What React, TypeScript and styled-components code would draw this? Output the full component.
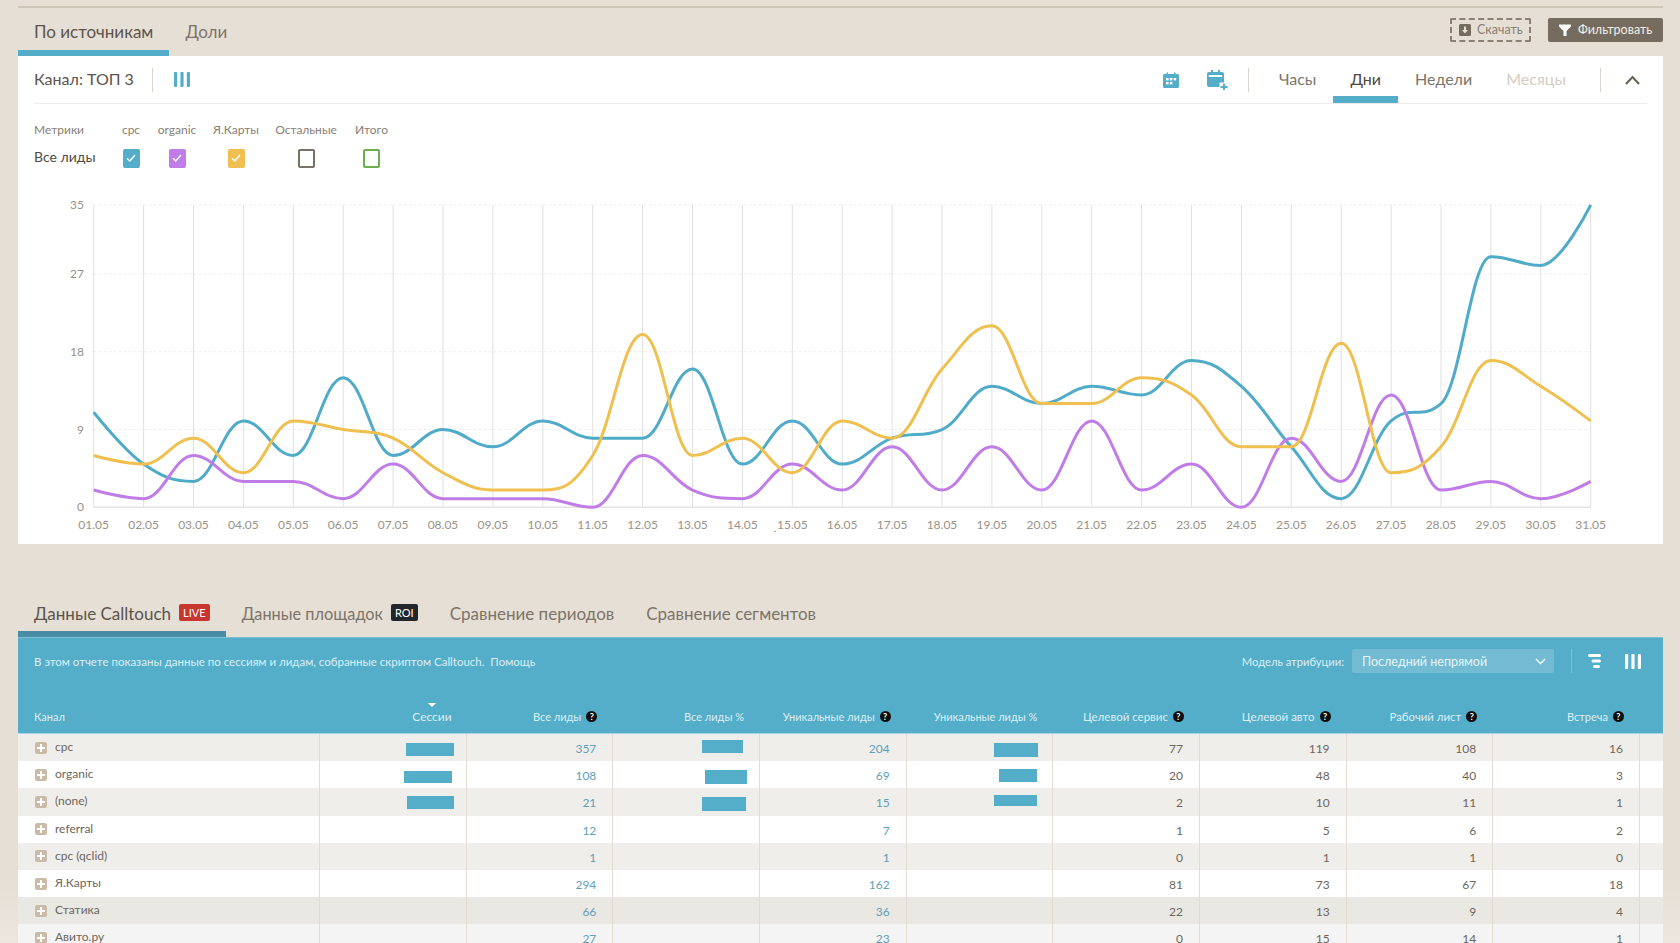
import React from "react";
import styled, { createGlobalStyle } from "styled-components";

const FONT = `"Lato", "Noto Sans", "Open Sans", sans-serif`;
const BLUE = "#54adc9";

const Global = createGlobalStyle`
  html, body { margin: 0; padding: 0; background: #e6dfd6; }
  body { font-family: ${FONT}; overflow: hidden; }
  * { box-sizing: border-box; }
`;

const Page = styled.div`
  width: 1680px;
  height: 943px;
  overflow: hidden;
  padding: 6px 17px 0 18px;
  background: linear-gradient(to bottom, #e6dfd6 0, #e6dfd6 880px, #ece6de 943px);
`;
const TopRule = styled.div`
  height: 2px;
  background: #cfc6ba;
`;
const TabBar = styled.div`
  height: 48px;
  display: flex;
  justify-content: space-between;
`;
const Tabs = styled.div`
  display: flex;
`;
const Tab = styled.div<{ $active?: boolean; $dark?: boolean; $size?: number }>`
  display: flex;
  align-items: center;
  gap: 8px;
  padding: 5px 16px 0;
  font-size: ${(p) => p.$size ?? 17}px;
  white-space: nowrap;
  color: ${(p) => (p.$active ? "#5b544b" : "#7d7468")};
  border-bottom: 6px solid
    ${(p) => (p.$active ? (p.$dark ? "#4a8ba5" : BLUE) : "transparent")};
`;
const LowerTab = styled(Tab)`
  padding-top: 7px;
`;
const Badge = styled.span<{ $bg: string }>`
  background: ${(p) => p.$bg};
  color: #fff;
  font-size: 11px;
  line-height: 17px;
  height: 17px;
  padding: 0 4px;
  border-radius: 2px;
  margin-top: -3px;
`;
const Actions = styled.div`
  display: flex;
  gap: 17px;
  padding-top: 10px;
`;
const DownloadBtn = styled.div`
  width: 81px;
  height: 24px;
  border: 2px dashed #8a8073;
  border-radius: 2px;
  display: flex;
  align-items: center;
  gap: 6px;
  padding-left: 7px;
  font-size: 12.5px;
  color: #8a8073;
`;
const BtnText = styled.span`
  margin-top: -2px;
`;
const FilterBtn = styled.div`
  width: 115px;
  height: 24px;
  background: #756b5e;
  border-radius: 2px;
  display: flex;
  align-items: center;
  gap: 7px;
  padding-left: 11px;
  font-size: 12.5px;
  color: #f2eee8;
`;
const Card = styled.div`
  height: 488px;
  background: #fff;
`;
const CardHead = styled.div`
  height: 48px;
  margin: 0 16px;
  border-bottom: 1px solid #ececec;
  display: flex;
  align-items: center;
`;
const Title = styled.div`
  font-size: 16px;
  color: #5b544b;
  white-space: nowrap;
  width: 118px;
  margin-top: -3px;
`;
const VRule = styled.div<{ $c?: string }>`
  width: 1px;
  height: 24px;
  background: ${(p) => p.$c ?? "#ddd6cc"};
`;
const ColsIconWrap = styled.div`
  margin-left: 21px;
  display: flex;
`;
const Spacer = styled.div`
  flex: 1;
`;
const CalIcons = styled.div`
  display: flex;
  align-items: center;
  gap: 28px;
  margin-right: 20px;
`;
const Period = styled.div<{ $active?: boolean; $off?: boolean }>`
  align-self: stretch;
  display: flex;
  align-items: center;
  padding: 4px 17px 0;
  font-size: 16px;
  border-bottom: 7px solid ${(p) => (p.$active ? BLUE : "transparent")};
  color: ${(p) => (p.$off ? "#d5cdc2" : p.$active ? "#4f4941" : "#7d7468")};
`;
const Periods = styled.div`
  align-self: stretch;
  display: flex;
  margin-left: 13px;
  margin-right: 17px;
`;
const Chevron = styled.div`
  margin-left: 24px;
  margin-right: 7px;
  display: flex;
`;
const Metrics = styled.div`
  padding: 17px 0 0 16px;
  height: 76px;
  display: grid;
  grid-template-columns: 72px 20px 42px 46px 64px 37px;
  column-gap: 15px;
  grid-template-rows: 16px 20px;
  row-gap: 11px;
  justify-items: center;
  align-items: center;
  justify-content: start;
`;
const MetricHead = styled.div`
  font-size: 12px;
  color: #8a8073;
  white-space: nowrap;
`;
const MetricFirst = styled(MetricHead)`
  justify-self: start;
`;
const MetricName = styled.div`
  justify-self: start;
  font-size: 14px;
  color: #4f4941;
  white-space: nowrap;
  margin-top: -3px;
`;
const Check = styled.div<{ $fill?: string; $line?: string }>`
  width: 17px;
  height: 19px;
  border-radius: 2px;
  background: ${(p) => p.$fill ?? "#fff"};
  border: ${(p) => (p.$line ? `2px solid ${p.$line}` : "none")};
  display: flex;
  align-items: center;
  justify-content: center;
`;
const ChartSvg = styled.svg`
  display: block;
  width: 1645px;
  height: 364px;
`;
const LowerTabs = styled.div`
  display: flex;
  margin-top: 45px;
  height: 48px;
`;
const Panel = styled.div`
  background: ${BLUE};
  height: 97px;
  border-top: 1px solid #7dbfd5;
`;
const Toolbar = styled.div`
  height: 49px;
  padding: 0 12px 3px 16px;
  display: flex;
  align-items: center;
  color: #dceff5;
`;
const Info = styled.div`
  font-size: 11.5px;
  white-space: pre;
`;
const ModelLabel = styled.div`
  font-size: 11.2px;
  margin-right: 8px;
`;
const Select = styled.div`
  width: 202px;
  height: 24px;
  background: #72bbd3;
  border-radius: 2px;
  padding: 0 8px 0 10px;
  display: flex;
  justify-content: space-between;
  align-items: center;
  font-size: 12.5px;
  color: #e8f5f9;
  margin-right: 17px;
`;
const ToolIcons = styled.div`
  display: flex;
  align-items: center;
  gap: 24px;
  margin-left: 16px;
  margin-right: 10px;
`;
const grid = `
  display: grid;
  grid-template-columns: 302px repeat(9, 146.67px) 1fr;
`;
const HeadRow = styled.div`
  ${grid}
  height: 47px;
  border-bottom: 1px solid #a9d3e1;
  color: #dceff5;
`;
const HeadCell = styled.div<{ $left?: boolean; $pad?: number; $size?: number }>`
  position: relative;
  display: flex;
  justify-content: ${(p) => (p.$left ? "flex-start" : "flex-end")};
  align-items: center;
  gap: 5px;
  font-size: ${(p) => p.$size ?? 11}px;
  padding: ${(p) => (p.$left ? "12px 0 0 16px" : `12px ${p.$pad ?? 16}px 0 0`)};
  white-space: nowrap;
`;
const SortMark = styled.span`
  position: absolute;
  top: 16px;
  right: 31px;
  width: 0;
  height: 0;
  border-left: 4px solid transparent;
  border-right: 4px solid transparent;
  border-top: 4px solid #fff;
`;
const Help = styled.span`
  width: 11px;
  height: 11px;
  border-radius: 50%;
  background: #0d0d0d;
  color: #fff;
  font-size: 9px;
  font-weight: 700;
  line-height: 11px;
  text-align: center;
  flex: none;
`;
const Row = styled.div<{ $odd: boolean; $bg?: string }>`
  ${grid}
  height: 27.2px;
  background: ${(p) => p.$bg ?? (p.$odd ? "#f0eeea" : "#fff")};
`;
const NameCell = styled.div`
  display: flex;
  align-items: center;
  gap: 8px;
  padding: 0 0 2px 17px;
  font-size: 12px;
  color: #6d665d;
  border-right: 1px solid #e3dcd3;
`;
const Plus = styled.span`
  width: 12px;
  height: 12px;
  margin-top: 2px;
  background: #c9bba7;
  border-radius: 2px;
  display: flex;
  align-items: center;
  justify-content: center;
`;
const Cell = styled.div<{ $link?: boolean }>`
  display: flex;
  justify-content: flex-end;
  align-items: center;
  padding: 2px 16px 0 0;
  font-size: 12px;
  color: ${(p) => (p.$link ? "#5f9fb8" : "#6d665d")};
  border-right: 1px solid #e3dcd3;
`;
const TailCell = styled.div``;
const Bar = styled.div<{ $w: number; $h: number; $r: number; $t: number }>`
  width: ${(p) => p.$w}px;
  height: ${(p) => p.$h}px;
  margin-right: ${(p) => p.$r}px;
  transform: translateY(${(p) => p.$t}px);
  background: ${BLUE};
`;

// ---- chart ----
const X0 = 93.7;
const STEP = 49.9;
const Y0 = 507.3;
const UNIT = 8.64;
const xAt = (i: number) => X0 + i * STEP;
const yAt = (v: number) => Y0 - v * UNIT;

function spline(data: number[]): string {
  const pts = data.map((v, i) => [xAt(i), yAt(v)]);
  const ctrl = pts.map(([x, y], i) => {
    const prev = pts[i - 1];
    const next = pts[i + 1];
    if (!prev || !next) return { lx: x, ly: y, rx: x, ry: y };
    const s = 1.5;
    const d = 2.5;
    const lx = (s * x + prev[0]) / d;
    let ly = (s * y + prev[1]) / d;
    const rx = (s * x + next[0]) / d;
    let ry = (s * y + next[1]) / d;
    const c = ((ry - ly) * (rx - x)) / (rx - lx) + y - ry;
    ly += c;
    ry += c;
    if (ly > prev[1] && ly > y) {
      ly = Math.max(prev[1], y);
      ry = 2 * y - ly;
    } else if (ly < prev[1] && ly < y) {
      ly = Math.min(prev[1], y);
      ry = 2 * y - ly;
    }
    if (ry > next[1] && ry > y) {
      ry = Math.max(next[1], y);
      ly = 2 * y - ry;
    } else if (ry < next[1] && ry < y) {
      ry = Math.min(next[1], y);
      ly = 2 * y - ry;
    }
    return { lx, ly, rx, ry };
  });
  let d = `M${pts[0][0]} ${pts[0][1]}`;
  for (let i = 1; i < pts.length; i++) {
    const a = ctrl[i - 1];
    const b = ctrl[i];
    d += ` C${a.rx.toFixed(2)} ${a.ry.toFixed(2)} ${b.lx.toFixed(2)} ${b.ly.toFixed(2)} ${pts[i][0].toFixed(2)} ${pts[i][1].toFixed(2)}`;
  }
  return d;
}

const cpc = [11, 5, 3, 10, 6, 15, 6, 9, 7, 10, 8, 8, 16, 5, 10, 5, 8, 9, 14, 12, 14, 13, 17, 14, 7, 1, 10, 12, 29, 28, 35];
const yellow = [6, 5, 8, 4, 10, 9, 8, 4, 2, 2, 6, 20, 6, 8, 4, 10, 8, 16, 21, 12, 12, 15, 13, 7, 7, 19, 4, 7, 17, 14, 10];
const purple = [2, 1, 6, 3, 3, 1, 5, 1, 1, 1, 0, 6, 2, 1, 5, 2, 7, 2, 7, 2, 10, 2, 5, 0, 8, 3, 13, 2, 3, 1, 3];

const Chart = () => (
  <ChartSvg viewBox="18 180 1645 364">
    {[35, 27, 18, 9].map((v) => (
      <line key={v} x1={X0} x2={xAt(30)} y1={yAt(v)} y2={yAt(v)} stroke="#eeeeee" strokeWidth="1" strokeDasharray="3 2" />
    ))}
    {cpc.map((_, i) => (
      <line key={i} x1={xAt(i)} x2={xAt(i)} y1={yAt(35)} y2={Y0} stroke="#e0e0e0" strokeWidth="1" />
    ))}
    <line x1={X0} x2={xAt(30)} y1={Y0} y2={Y0} stroke="#e4e4e4" strokeWidth="1.5" />
    {[35, 27, 18, 9, 0].map((v) => (
      <text key={v} x={84} y={yAt(v) + 4} textAnchor="end" fontSize="12" fill="#9b9285" fontFamily={FONT}>
        {v}
      </text>
    ))}
    {cpc.map((_, i) => (
      <text key={i} x={xAt(i)} y={529} textAnchor="middle" fontSize="12" fill="#9b9285" fontFamily={FONT}>
        {String(i + 1).padStart(2, "0")}.05
      </text>
    ))}
    <circle cx={775} cy={531.5} r={0.7} fill="#777" />
    <path d={spline(cpc)} fill="none" stroke="#4fabc7" strokeWidth="3" />
    <path d={spline(purple)} fill="none" stroke="#c07de8" strokeWidth="3" />
    <path d={spline(yellow)} fill="none" stroke="#efc04f" strokeWidth="3" />
  </ChartSvg>
);

// ---- icons ----
const ColsIcon = ({ c }: { c: string }) => (
  <svg width="16" height="15" viewBox="0 0 16 15">
    <rect x="0" y="0" width="3.2" height="15" rx="1" fill={c} />
    <rect x="6.4" y="0" width="3.2" height="15" rx="1" fill={c} />
    <rect x="12.8" y="0" width="3.2" height="15" rx="1" fill={c} />
  </svg>
);
const CalIcon = () => (
  <svg width="16" height="16" viewBox="0 0 16 16">
    <path d="M1.5 2H3.5V0.5H5V2H11V0.5H12.5V2H14.5C15.3 2 16 2.7 16 3.5V14.5C16 15.3 15.3 16 14.5 16H1.5C0.7 16 0 15.3 0 14.5V3.5C0 2.7 0.7 2 1.5 2Z" fill={BLUE} />
    <g fill="#fff">
      <rect x="3" y="6" width="2.6" height="2.4" />
      <rect x="6.8" y="6" width="2.6" height="2.4" />
      <rect x="10.6" y="6" width="2.6" height="2.4" />
      <rect x="3" y="10" width="2.6" height="2.4" />
      <rect x="6.8" y="10" width="2.6" height="2.4" />
    </g>
  </svg>
);
const CalPlusIcon = () => (
  <svg width="21" height="20" viewBox="0 0 21 20">
    <path d="M2 2H4V0H6V2H11V0H13V2H15C16.1 2 17 2.9 17 4V12.5H12.5V17H2C0.9 17 0 16.1 0 15V4C0 2.9 0.9 2 2 2Z" fill={BLUE} />
    <rect x="1.8" y="5" width="13.4" height="2" fill="#fff" />
    <path d="M16 13.5H18V16H20.5V18H18V20H16V18H13.5V16H16Z" fill={BLUE} />
  </svg>
);
const ChevronUp = () => (
  <svg width="15" height="10" viewBox="0 0 15 10">
    <path d="M1 9L7.5 2L14 9" fill="none" stroke="#6e6559" strokeWidth="2.2" />
  </svg>
);
const ChevronDown = () => (
  <svg width="11" height="7" viewBox="0 0 11 7">
    <path d="M1 1L5.5 5.5L10 1" fill="none" stroke="#e8f5f9" strokeWidth="1.6" />
  </svg>
);
const DownIcon = () => (
  <svg width="12" height="12" viewBox="0 0 12 12">
    <rect width="12" height="12" rx="1.5" fill="#756b5e" />
    <path d="M5 2.5H7V6H9L6 9.5L3 6H5Z" fill="#e6dfd6" />
  </svg>
);
const FunnelIcon = () => (
  <svg width="12" height="12" viewBox="0 0 12 12">
    <path d="M0 0.5H12V2.5L7.5 7V12H4.5V7L0 2.5Z" fill="#fff" />
  </svg>
);
const TickIcon = () => (
  <svg width="10" height="8" viewBox="0 0 10 8">
    <path d="M1 4.2L3.8 7L9 1" fill="none" stroke="#fff" strokeWidth="1.4" />
  </svg>
);
const StackIcon = () => (
  <svg width="13" height="14" viewBox="0 0 13 14">
    <rect x="0" y="0" width="13" height="3" rx="1.5" fill="#fff" />
    <rect x="3.5" y="5.5" width="9.5" height="3" rx="1.5" fill="#fff" />
    <rect x="5" y="11" width="7" height="3" rx="1.5" fill="#fff" />
  </svg>
);
const PlusIcon = () => (
  <svg width="8" height="8" viewBox="0 0 8 8">
    <path d="M3 0H5V3H8V5H5V8H3V5H0V3H3Z" fill="#fff" />
  </svg>
);

// ---- data ----
const heads: { t: string; help?: boolean; pad?: number; sort?: boolean; size?: number }[] = [
  { t: "Сессии", pad: 15, sort: true, size: 12 },
  { t: "Все лиды", help: true },
  { t: "Все лиды %" },
  { t: "Уникальные лиды", help: true },
  { t: "Уникальные лиды %" },
  { t: "Целевой сервис", help: true, size: 11.5 },
  { t: "Целевой авто", help: true, size: 11.5 },
  { t: "Рабочий лист", help: true, size: 11.4 },
  { t: "Встреча", help: true },
];
type B = { w: number; h: number; r: number; t: number };
const rows: { n: string; v: number[]; b?: [B, B, B]; bg?: string }[] = [
  { n: "cpc", v: [357, 204, 77, 119, 108, 16], b: [
    { w: 48, h: 13, r: -4, t: 1 }, { w: 41, h: 13, r: 0, t: -2 }, { w: 44, h: 14, r: -2, t: 1 } ] },
  { n: "organic", v: [108, 69, 20, 48, 40, 3], b: [
    { w: 48, h: 12, r: -2, t: 1 }, { w: 42, h: 14, r: -4, t: 1 }, { w: 38, h: 13, r: -1, t: 0 } ] },
  { n: "(none)", v: [21, 15, 2, 10, 11, 1], b: [
    { w: 47, h: 13, r: -4, t: 0 }, { w: 44, h: 14, r: -3, t: 1 }, { w: 43, h: 11, r: -1, t: -2 } ] },
  { n: "referral", v: [12, 7, 1, 5, 6, 2] },
  { n: "cpc (qclid)", v: [1, 1, 0, 1, 1, 0] },
  { n: "Я.Карты", v: [294, 162, 81, 73, 67, 18] },
  { n: "Статика", v: [66, 36, 22, 13, 9, 4], bg: "#eae8e3" },
  { n: "Авито.ру", v: [27, 23, 0, 15, 14, 1], bg: "#f4f4f4" },
];

export default function App() {
  return (
    <Page>
      <Global />
      <TopRule />
      <TabBar>
        <Tabs>
          <Tab $active>По источникам</Tab>
          <Tab>Доли</Tab>
        </Tabs>
        <Actions>
          <DownloadBtn>
            <DownIcon />
            <BtnText>Скачать</BtnText>
          </DownloadBtn>
          <FilterBtn>
            <FunnelIcon />
            <BtnText>Фильтровать</BtnText>
          </FilterBtn>
        </Actions>
      </TabBar>
      <Card>
        <CardHead>
          <Title>Канал: ТОП 3</Title>
          <VRule />
          <ColsIconWrap>
            <ColsIcon c={BLUE} />
          </ColsIconWrap>
          <Spacer />
          <CalIcons>
            <CalIcon />
            <CalPlusIcon />
          </CalIcons>
          <VRule />
          <Periods>
            <Period>Часы</Period>
            <Period $active>Дни</Period>
            <Period>Недели</Period>
            <Period $off>Месяцы</Period>
          </Periods>
          <VRule />
          <Chevron>
            <ChevronUp />
          </Chevron>
        </CardHead>
        <Metrics>
          <MetricFirst>Метрики</MetricFirst>
          <MetricHead>cpc</MetricHead>
          <MetricHead>organic</MetricHead>
          <MetricHead>Я.Карты</MetricHead>
          <MetricHead>Остальные</MetricHead>
          <MetricHead>Итого</MetricHead>
          <MetricName>Все лиды</MetricName>
          <Check $fill="#54adc9"><TickIcon /></Check>
          <Check $fill="#c07de8"><TickIcon /></Check>
          <Check $fill="#efc04f"><TickIcon /></Check>
          <Check $line="#7a7064" />
          <Check $line="#6ab04c" />
        </Metrics>
        <Chart />
      </Card>
      <LowerTabs>
        <LowerTab $active $dark>
          Данные Calltouch <Badge $bg="#c9352f">LIVE</Badge>
        </LowerTab>
        <LowerTab $size={16.3}>
          Данные площадок <Badge $bg="#22272b">ROI</Badge>
        </LowerTab>
        <LowerTab>Сравнение периодов</LowerTab>
        <LowerTab>Сравнение сегментов</LowerTab>
      </LowerTabs>
      <Panel>
        <Toolbar>
          <Info>В этом отчете показаны данные по сессиям и лидам, собранные скриптом Calltouch.  Помощь</Info>
          <Spacer />
          <ModelLabel>Модель атрибуции:</ModelLabel>
          <Select>
            Последний непрямой
            <ChevronDown />
          </Select>
          <VRule $c="#7dbfd5" />
          <ToolIcons>
            <StackIcon />
            <ColsIcon c="#fff" />
          </ToolIcons>
        </Toolbar>
        <HeadRow>
          <HeadCell $left>Канал</HeadCell>
          {heads.map((h) => (
            <HeadCell key={h.t} $pad={h.pad} $size={h.size}>
              {h.sort && <SortMark />}
              {h.t}
              {h.help && <Help>?</Help>}
            </HeadCell>
          ))}
        </HeadRow>
      </Panel>
      {rows.map((r, i) => (
        <Row key={r.n} $odd={i % 2 === 0} $bg={r.bg}>
          <NameCell>
            <Plus><PlusIcon /></Plus>
            {r.n}
          </NameCell>
          <Cell>{r.b && <Bar $w={r.b[0].w} $h={r.b[0].h} $r={r.b[0].r} $t={r.b[0].t} />}</Cell>
          <Cell $link>{r.v[0]}</Cell>
          <Cell>{r.b && <Bar $w={r.b[1].w} $h={r.b[1].h} $r={r.b[1].r} $t={r.b[1].t} />}</Cell>
          <Cell $link>{r.v[1]}</Cell>
          <Cell>{r.b && <Bar $w={r.b[2].w} $h={r.b[2].h} $r={r.b[2].r} $t={r.b[2].t} />}</Cell>
          <Cell>{r.v[2]}</Cell>
          <Cell>{r.v[3]}</Cell>
          <Cell>{r.v[4]}</Cell>
          <Cell>{r.v[5]}</Cell>
          <TailCell />
        </Row>
      ))}
    </Page>
  );
}
